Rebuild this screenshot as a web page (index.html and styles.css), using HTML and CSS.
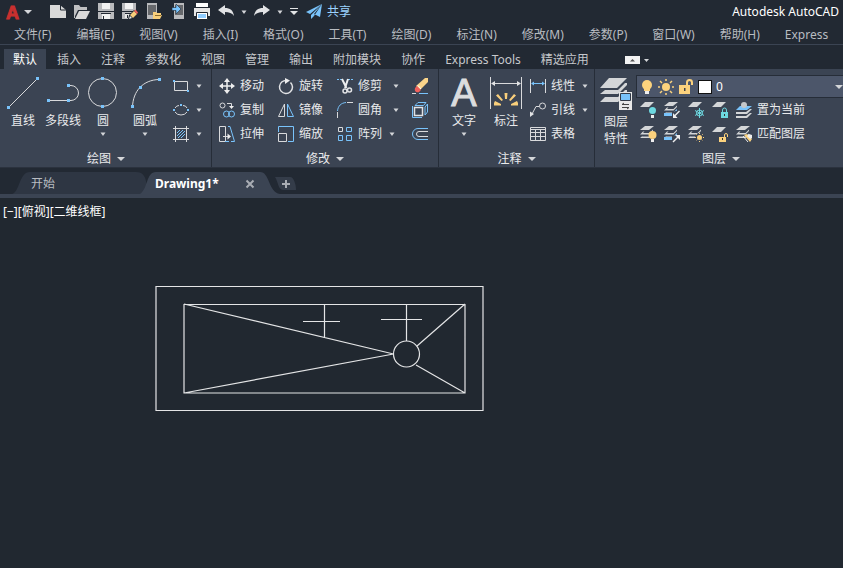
FILE: index.html
```html
<!DOCTYPE html>
<html lang="zh-CN">
<head>
<meta charset="utf-8">
<meta name="viewport" content="width=device-width, initial-scale=1">
<title>Autodesk AutoCAD</title>
<link rel="stylesheet" href="styles.css">
</head>
<body>
<svg class="defs" aria-hidden="true">
  <symbol id="caret" viewBox="0 0 8 8"><path d="M1.500 2.500h5L4 6z" fill="#d4d6d9"/></symbol>
  <symbol id="caret-lg" viewBox="0 0 8 8"><path d="M0 2h8L4 6z" fill="#d4d6d9"/></symbol>
  <symbol id="sheets" viewBox="0 0 16 16"><path d="M5 0h9L9 4H0zM3 5.500h1.500L3 7h6.500L13 3.500V5L9.500 8.500H0zM3 9.500L0 12h9.500L13 9V7.500L9.500 10.500H2z" fill="#d4d6d8"/></symbol>
  <symbol id="sheet" viewBox="0 0 16 16"><path d="M5 1h9L9 6H0z" fill="#d4d6d8"/></symbol>
</svg>

<header class="titlebar">
  <button class="app" aria-label="应用程序">
    <svg width="16" height="22" viewBox="0 0 16 22"><text x="1" y="18" class="logo">A</text></svg>
    <svg width="8" height="8"><use href="#caret-lg"/></svg>
  </button>
  <div class="quick">
    <button aria-label="新建"><svg width="16" height="18" viewBox="0 0 16 18"><path d="M0 2h10l6 5v8H0z" fill="#d9d9d9"/><path d="M10.500 2v5H16" fill="none" stroke="#222933"/></svg></button>
    <button aria-label="打开"><svg width="16" height="18" viewBox="0 0 16 18"><path d="M0 2h5l1.500 2H13v3H4L1 13v2H0z" fill="#bfc0c2"/><path d="M5 8h11l-4 8H1z" fill="#d9d9d9"/></svg></button>
    <button aria-label="保存"><svg width="16" height="18" viewBox="0 0 16 18"><path d="M0 0h16v16H0z" fill="#b9babd"/><path d="M4 0h8v6H4z" fill="#f2f2f2"/><path d="M4 11h8v5H4z" fill="#f2f2f2"/><path d="M0 8.500h16M3 10.500h10M5.500 13v3" stroke="#222933"/></svg></button>
    <button aria-label="另存为"><svg width="16" height="18" viewBox="0 0 16 18"><path d="M0 0h14v10l-5 6H0z" fill="#b9babd"/><path d="M3 0h8v6H3z" fill="#f2f2f2"/><path d="M3 11h6v4H3z" fill="#e9e9e9"/><path d="M0 8.500h13M3 10.500h7M5.500 12v3" stroke="#222933"/><path d="M6 16l1-4 5-5 4 3-6 6z" fill="#222933"/><path d="M8 12l4-4 3 3-4 4z" fill="#f9cf7b"/><path d="M12 8l1.500-1.500L16 9.500 15 11z" fill="#f0605b"/><path d="M7 16l1-3 2 2z" fill="#eee"/></svg></button>
    <button aria-label="从移动设备打开"><svg width="16" height="18" viewBox="0 0 16 18"><path d="M1 0h10v16H1z" fill="#b9babd"/><path d="M2 2h8v10H2z" fill="#66686c"/><path d="M7 9h3l1 1h4v2h1l-2 4H7z" fill="#f9cf7b"/><path d="M9 12.500h6" stroke="#8a6a2a"/></svg></button>
    <button aria-label="保存到移动设备"><svg width="16" height="18" viewBox="0 0 16 18"><path d="M4 0h10v16H4z" fill="#b9babd"/><path d="M5 2h8v10H5z" fill="#66686c"/><path d="M2 4.500h4V1l5 5-5 5V7.500H2z" fill="#79c3fb" stroke="#222933" stroke-width=".6"/></svg></button>
    <button aria-label="打印"><svg width="16" height="18" viewBox="0 0 16 18"><path d="M2 0h12v4H2z" fill="#fff"/><path d="M0 5h16v8H0z" fill="#e6e6e6"/><path d="M2.500 9.500h11v7h-11z" fill="#fff" stroke="#222933"/><path d="M4 11h8v4H4z" fill="#8fccff"/></svg></button>
    <button aria-label="放弃"><svg width="16" height="18" viewBox="0 0 16 18"><path d="M0 7l7-5v3c5 0 8 2 9 8-2-3-5-4-9-4v3z" fill="#e2e3e5"/></svg></button>
    <button class="drop" aria-label="放弃列表"><svg width="8" height="8"><use href="#caret"/></svg></button>
    <button aria-label="重做"><svg width="16" height="18" viewBox="0 0 16 18"><path d="M16 7L9 2v3C4 5 1 7 0 13c2-3 5-4 9-4v3z" fill="#e2e3e5"/></svg></button>
    <button class="drop" aria-label="重做列表"><svg width="8" height="8"><use href="#caret"/></svg></button>
    <button aria-label="自定义"><svg width="8" height="8" viewBox="0 0 8 8"><path d="M0 .500h8" stroke="#e2e3e5"/><path d="M0 3h8L4 7z" fill="#e2e3e5"/></svg></button>
    <button class="share"><svg width="16" height="18" viewBox="0 0 16 18"><path d="M16 1L0 9l4 2zM16 1L5 12v4l3-3zM16 1l-2 13-6-3z" fill="#79c3fb"/></svg>共享</button>
  </div>
  <h1>Autodesk AutoCAD</h1>
</header>

<nav class="menubar">
  <button>文件(F)</button><button>编辑(E)</button><button>视图(V)</button><button>插入(I)</button><button>格式(O)</button><button>工具(T)</button><button>绘图(D)</button><button>标注(N)</button><button>修改(M)</button><button>参数(P)</button><button>窗口(W)</button><button>帮助(H)</button><button>Express</button>
</nav>

<nav class="tabs">
  <button class="on">默认</button><button>插入</button><button>注释</button><button>参数化</button><button>视图</button><button>管理</button><button>输出</button><button>附加模块</button><button>协作</button><button>Express Tools</button><button>精选应用</button>
  <button class="collapse" aria-label="最小化功能区"><svg width="26" height="10" viewBox="0 0 26 10"><path d="M0 1h15v8H0z" fill="#f2f2f2"/><path d="M5 6.500h5L7.500 4z" fill="#555"/><path d="M19 4h5l-2.500 3z" fill="#d4d6d9"/></svg></button>
</nav>

<main class="ribbon">
  <section class="panel draw">
    <div class="tools">
      <button class="big"><svg width="32" height="32" viewBox="0 0 32 32"><path d="M1.500 30.500l29-29" class="w"/><path d="M0 29h3v3H0zM29 0h3v3h-3z" class="d"/></svg>直线</button>
      <button class="big"><svg width="32" height="32" viewBox="0 0 32 32"><path d="M2 23.500h19M21 8.500h3a7.500 7.500 0 0 1 0 15h-3" class="w"/><path d="M0 22h3v3H0zM20 22h3v3h-3zM20 7h3v3h-3z" class="d"/></svg>多段线</button>
      <button class="big"><svg width="32" height="32" viewBox="0 0 32 32"><circle cx="15.500" cy="15.500" r="14" class="w"/><path d="M14 0h3v3h-3zM14 28h3v3h-3z" class="d"/></svg>圆<svg class="under" width="8" height="8"><use href="#caret"/></svg></button>
      <button class="big wide"><svg width="32" height="32" viewBox="0 0 32 32"><path d="M3.500 30C4 14 14 3 30 2.500" class="w"/><path d="M2 28h3v3H2zM10 9h3v3h-3zM29 1h3v3h-3z" class="d"/></svg>圆弧<svg class="under" width="8" height="8"><use href="#caret"/></svg></button>
      <div class="stack">
        <button class="row" aria-label="矩形"><svg width="16" height="16" viewBox="0 0 16 16"><path d="M1.500 3.500h13v9h-13z" class="w"/><path d="M0 2h2v2H0zM14 12h2v2h-2z" class="d"/></svg><svg width="8" height="8"><use href="#caret"/></svg></button>
        <button class="row" aria-label="椭圆"><svg width="16" height="16" viewBox="0 0 16 16"><path d="M2 6Q3.500 3.500 6 3.500M10 3.500Q13 3.500 14 6M2 10Q4 13 8 13T14 10" class="w"/><path d="M0 7h2v2H0zM14 7h2v2h-2zM7 2h2v2H7z" class="d"/></svg><svg width="8" height="8"><use href="#caret"/></svg></button>
        <button class="row" aria-label="图案填充"><svg width="16" height="16" viewBox="0 0 16 16"><path d="M0 2.500h16M0 13.500h16M2.500 0v16M13.500 0v16" class="w"/><path d="M4 7l3-3M4 10l6-6M5 12l7-7M8 12l4-4" class="b"/></svg><svg width="8" height="8"><use href="#caret"/></svg></button>
      </div>
    </div>
    <button class="caption">绘图<svg width="8" height="8"><use href="#caret-lg"/></svg></button>
  </section>

  <section class="panel modify">
    <div class="tools">
      <div class="stack">
        <button class="row"><svg width="16" height="16" viewBox="0 0 16 16"><path d="M8 2v12M2 8h12" stroke="#eee" stroke-width="1.500"/><path d="M8 0l3 4H5zM8 16l-3-4h6zM0 8l4-3v6zM16 8l-4 3V5z" fill="#eee"/></svg>移动</button>
        <button class="row"><svg width="16" height="16" viewBox="0 0 16 16"><circle cx="3.500" cy="3.500" r="2.500" class="w"/><circle cx="7.500" cy="12" r="3" class="b"/><circle cx="12.500" cy="12" r="3" class="b"/><path d="M8 1.500h4.500V5" class="w"/><path d="M10 4h5l-2.500 3z" fill="#eee"/></svg>复制</button>
        <button class="row"><svg width="16" height="16" viewBox="0 0 16 16"><path d="M.500.500h6v15h-6z" class="w"/><path d="M9 .500h2l4.500 15H12M6 15.500h4" class="b"/><path d="M4 10.500h6" class="w"/><path d="M8.500 7.500l3.500 3-3.500 3z" fill="#eee"/></svg>拉伸</button>
      </div>
      <div class="stack">
        <button class="row"><svg width="16" height="16" viewBox="0 0 16 16"><path d="M9 2.500A6.500 6.500 0 1 0 14.500 9c0-2-.5-3-2-4.500" stroke="#e2e3e5" stroke-width="1.500" fill="none"/><path d="M7 0l5 2.500L7 6z" fill="#eee"/></svg>旋转</button>
        <button class="row"><svg width="16" height="16" viewBox="0 0 16 16"><path d="M6.500 2v12.500h-6z" class="w"/><path d="M9.500 2v12.500h6z" class="b"/></svg>镜像</button>
        <button class="row"><svg width="16" height="16" viewBox="0 0 16 16"><path d="M.500 6V.500h15v15H10" class="b"/><path d="M.500 7.500h8v8h-8z" class="w"/></svg>缩放</button>
      </div>
      <div class="stack">
        <button class="row"><svg width="16" height="16" viewBox="0 0 16 16"><path d="M0 1.500h5M11 1.500h5" class="b" stroke-dasharray="2 1"/><path d="M5 1l4.500 9M11 1L8 10" stroke="#eee" stroke-width="2"/><circle cx="8" cy="13" r="2" class="w2"/><circle cx="12.500" cy="12" r="2" class="w2"/></svg>修剪<svg width="8" height="8"><use href="#caret"/></svg></button>
        <button class="row"><svg width="16" height="16" viewBox="0 0 16 16"><path d="M.500 9C1 4 4 1 9 .500" class="b"/><path d="M10 .500h6M.500 10v6" class="w"/></svg>圆角<svg width="8" height="8"><use href="#caret"/></svg></button>
        <button class="row"><svg width="16" height="16" viewBox="0 0 16 16"><path d="M1.500 1.500h4v4h-4z" class="w"/><path d="M9.500 1.500h5v4h-5zM1.500 9.500h4v5h-4zM9.500 9.500h5v5h-5z" class="b"/></svg>阵列<svg class="near" width="8" height="8"><use href="#caret"/></svg></button>
      </div>
      <div class="stack">
        <button class="row" aria-label="删除"><svg width="16" height="16" viewBox="0 0 16 16"><path d="M0 15.500h4" class="w"/><path d="M7 15.500h9" class="b"/><path d="M13 0h3v4l-8 8-4-4z" fill="#fbd58a"/><path d="M5 8l4 4-2 2c-3 1-5-1-4-4z" fill="#f0605b"/><path d="M6 7.500L9 11" stroke="#fff"/></svg></button>
        <button class="row" aria-label="分解"><svg width="16" height="16" viewBox="0 0 16 16"><path d="M2.500 5.500h8v8h-8z" class="w2"/><path d="M3 3.500L6 .500h8L11.500 3.500zM13 5l2.500-3v8L13 13zM.500 4v11.500H10" class="b"/></svg></button>
        <button class="row" aria-label="偏移"><svg width="16" height="16" viewBox="0 0 16 16"><path d="M16 2.500H6a5.500 5.500 0 0 0 0 11h10" class="b"/><path d="M16 5.500H7a2.500 2.500 0 0 0 0 5h9" class="w"/></svg></button>
      </div>
    </div>
    <button class="caption">修改<svg width="8" height="8"><use href="#caret-lg"/></svg></button>
  </section>

  <section class="panel annotate">
    <div class="tools">
      <button class="big"><svg width="32" height="32" viewBox="0 0 32 32"><text x="16" y="29" class="glyph">A</text></svg>文字<svg class="under" width="8" height="8"><use href="#caret"/></svg></button>
      <button class="big wide"><svg width="32" height="32" viewBox="0 0 32 32"><path d="M.500 0v32M31.500 0v32M2 6.500h28" class="w"/><path d="M1 6.500L5 4v5zM31 6.500L27 4v5z" fill="#e2e3e5"/><path d="M14.500 16h3l-.5 6h-2zM6 18.500l2-1.500 5 6-1.500 1zM26 18.500L24 17l-5 6 1.500 1zM4 26l1-2 6 3v1.500H4zM28 26l-1-2-6 3v1.500h7z" fill="#f9cf7b"/></svg>标注</button>
      <div class="stack">
        <button class="row"><svg width="16" height="16" viewBox="0 0 16 16"><path d="M.500 1v14M15.500 1v14" class="w"/><path d="M2 5.500h12" class="b"/><path d="M1 5.500L4 3.500v4zM15 5.500l-3-2v4z" class="d"/></svg>线性<svg width="8" height="8"><use href="#caret"/></svg></button>
        <button class="row"><svg width="16" height="16" viewBox="0 0 16 16"><circle cx="12.500" cy="4" r="3" class="w"/><path d="M9 4.500H6L2 12" class="w"/><path d="M0 15V9.500l4 2.500z" fill="#e2e3e5"/></svg>引线<svg width="8" height="8"><use href="#caret"/></svg></button>
        <button class="row"><svg width="16" height="16" viewBox="0 0 16 16"><path d="M.500 1.500h15v13H.500zM0 3.500h16M0 6.500h16M0 10.500h16M5.500 4v10M10.500 4v10" class="w"/></svg>表格</button>
      </div>
    </div>
    <button class="caption">注释<svg width="8" height="8"><use href="#caret-lg"/></svg></button>
  </section>

  <section class="panel layers">
    <div class="tools">
      <button class="big"><svg width="32" height="32" viewBox="0 0 32 32"><path d="M9 0h18L17 10H0zM5 12h13l7-7h2v2l-9 9H0zM5 19h13l7-7h2v3l-9 9H0z" fill="#d4d6d8"/><path d="M19 14h13v18H19z" fill="#e8e8e8"/><path d="M20.500 15.500h10v7h-10z" fill="#79c3fb" stroke="#333b48"/><path d="M22 26.500h7M22 29.500h7M24 25l-2 1.500M27 31l2-1.500" stroke="#444" fill="none"/></svg>图层<br>特性</button>
      <div class="layer-side">
        <label class="combo">
          <svg width="12" height="16" viewBox="0 0 12 16"><circle cx="5" cy="6" r="5" fill="#fcd27d"/><path d="M2 9h6v3H2z" fill="#fcd27d"/><path d="M3 12h4v3H3z" fill="#eee"/></svg>
          <svg width="16" height="16" viewBox="0 0 16 16"><circle cx="8" cy="8" r="4" fill="#fcd27d"/><path d="M8 0v2M8 14v2M0 8h2M14 8h2M2 2l2 2M12 12l2 2M14 2l-2 2M2 14l2-2" stroke="#fcd27d" stroke-width="1.500"/></svg>
          <svg width="16" height="16" viewBox="0 0 16 16"><path d="M1 6h11v9H1z" fill="#fcd27d"/><path d="M9 6V3.500a2.500 2.500 0 0 1 5 0V6" stroke="#fcd27d" stroke-width="2" fill="none"/><path d="M6 9h1.500v3H6z" fill="#444"/></svg>
          <span class="swatch"></span>
          <select aria-label="图层"><option>0</option></select>
          <svg width="8" height="8"><use href="#caret-lg"/></svg>
        </label>
        <div class="line">
          <button aria-label="关闭图层"><svg width="16" height="16" viewBox="0 0 16 16"><use href="#sheet" y="-1"/><circle cx="12.500" cy="8.500" r="3.500" fill="#6dd8e0"/><path d="M11 13h3v3h-3z" fill="#eee"/></svg></button>
          <button aria-label="隔离"><svg width="16" height="16" viewBox="0 0 16 16"><use href="#sheets"/><path d="M0 11h9l4-4v3l-4 4H0z" class="d"/><path d="M8 16v-6l8-2v8z" fill="#3b4453"/><path d="M15.500 9l-5 5" stroke="#eee" stroke-width="1.500"/><path d="M9 16v-5l4.500 5z" fill="#eee"/></svg></button>
          <button aria-label="冻结"><svg width="16" height="16" viewBox="0 0 16 16"><use href="#sheet" y="-1"/><path d="M11.500 6v10M7 8.500l9 5M7 13.500l9-5" stroke="#6dd8e0"/><circle cx="11.500" cy="11" r="3" fill="none" stroke="#6dd8e0"/></svg></button>
          <button aria-label="锁定"><svg width="16" height="16" viewBox="0 0 16 16"><use href="#sheet" y="-1"/><path d="M9 10h7v6H9z" fill="#6dd8e0"/><path d="M10.500 10V8a2 2 0 0 1 4 0v2" stroke="#6dd8e0" fill="none"/><path d="M12 12h1v2h-1z" fill="#333"/></svg></button>
          <button class="row"><svg width="16" height="16" viewBox="0 0 16 16"><path d="M4 4h12l-5 4H0z" class="d"/><path d="M0 10h10l4-3h2l-5 5H0zM0 14h10l4-3h2l-5 5H0z" fill="#d4d6d8"/><circle cx="8" cy="3" r="3" fill="#c5c7ca"/></svg>置为当前</button>
        </div>
        <div class="line">
          <button aria-label="打开所有图层"><svg width="16" height="16" viewBox="0 0 16 16"><use href="#sheets"/><circle cx="12.500" cy="9" r="4" fill="#fcd27d"/><path d="M11 13h3v3h-3z" fill="#eee"/></svg></button>
          <button aria-label="取消隔离"><svg width="16" height="16" viewBox="0 0 16 16"><use href="#sheets"/><path d="M0 11h9l4-4v3l-4 4H0z" class="d"/><path d="M8 16v-6l8-2v8z" fill="#3b4453"/><path d="M9 16l5-5" stroke="#eee" stroke-width="1.500"/><path d="M11 9h5v5z" fill="#eee"/></svg></button>
          <button aria-label="解冻所有图层"><svg width="16" height="16" viewBox="0 0 16 16"><use href="#sheets"/><circle cx="11.500" cy="11.500" r="4.500" fill="#3b4453"/><circle cx="11.500" cy="11.500" r="2.500" fill="#fcd27d"/><path d="M11.500 7v9M7 11.500h9M8 8l7 7M15 8l-7 7" stroke="#fcd27d" stroke-dasharray="1 7"/></svg></button>
          <button aria-label="解锁"><svg width="16" height="16" viewBox="0 0 16 16"><use href="#sheet"/><path d="M7 11h7v5H7z" fill="#fcd27d"/><path d="M12.500 11V9a1.500 1.500 0 0 1 3 0v2" stroke="#fcd27d" fill="none"/><path d="M10 12h1v2h-1z" fill="#333"/></svg></button>
          <button class="row"><svg width="16" height="16" viewBox="0 0 16 16"><use href="#sheets"/><path d="M8 9l3-1 5 5-2 3z" fill="#fcd27d"/><path d="M11 10l2-2 3 1v3l-2 1z" fill="#eee"/><path d="M7 10l5 6" stroke="#eee"/></svg>匹配图层</button>
        </div>
      </div>
    </div>
    <button class="caption">图层<svg width="8" height="8"><use href="#caret-lg"/></svg></button>
  </section>
</main>

<nav class="files">
  <button class="file"><svg class="shape" viewBox="0 0 136 22" preserveAspectRatio="none"><path d="M0 22C8 20 7 0 18 0h106c12 0 10 14 12 22z" fill="#2e3643"/></svg><span>开始</span></button>
  <div class="file current"><svg class="shape" viewBox="0 0 140 22" preserveAspectRatio="none"><path d="M0 22C8 17 6 0 16 0h104c10 0 8 20 20 22z" fill="#3b4453"/></svg><button class="name">Drawing1*</button><button class="close" aria-label="关闭"><svg width="10" height="10" viewBox="0 0 10 10"><path d="M1.500 1.500l7 7M8.500 1.500l-7 7" stroke="#a9adb4" stroke-width="2"/></svg></button></div>
  <button class="new" aria-label="新图形"><svg width="22" height="14" viewBox="0 0 22 14"><path d="M0 0h15c4 0 6 8 6 13H8C3 13 3 4 0 0z" fill="#343c49"/><path d="M11 3v8M7 7h8" stroke="#a9adb4" stroke-width="2"/></svg></button>
</nav>

<section class="canvas">
  <p>[−][俯视][二维线框]</p>
  <svg class="drawing" aria-label="图形">
    <path d="M156 88.500h327v124H156zM184 106.500h281v88.500H184zM184 106l209.500 50L184 195M417 148l48-42M416 167l49 28M324.500 106v34M303 123.500h37M406.500 106v37M381 121.500h41"/>
    <circle cx="406.500" cy="156" r="13"/>
  </svg>
</section>
</body>
</html>
```
FILE: styles.css
```css
* { box-sizing: border-box; }
html, body { height: 100%; }
body {
  margin: 0;
  display: flex;
  flex-direction: column;
  overflow: hidden;
  background: #222933;
  color: #e9eaec;
  font: 12px/16px "Noto Sans", "Noto Sans CJK SC", sans-serif;
}
button {
  margin: 0;
  padding: 0;
  border: 0;
  background: none;
  color: inherit;
  font: inherit;
  white-space: nowrap;
}
svg { display: block; flex: none; overflow: visible; }
.defs { position: absolute; width: 0; height: 0; }
.w { fill: none; stroke: #d9dadc; }
.w2 { fill: none; stroke: #e2e3e5; stroke-width: 1.5; }
.b { fill: none; stroke: #79c3fb; }
.d { fill: #79c3fb; }
.logo { font: bold 18px "Liberation Sans", sans-serif; fill: #c9302f; stroke: #c9302f; stroke-width: 1; }
.glyph { font: 38px "Liberation Sans", sans-serif; fill: #dcdddf; text-anchor: middle; stroke: #dcdddf; stroke-width: 1; }

.titlebar { display: flex; align-items: center; height: 23px; padding: 0 4px 0 5px; flex: none; }
.app { display: flex; align-items: center; gap: 3px; width: 45px; }
.quick { display: flex; align-items: center; gap: 8px; }
.quick .drop { margin: 0 -2px; width: 8px; }
.share { display: flex; align-items: center; gap: 5px; color: #9bd3ff; }
.titlebar h1 { margin: 0 0 0 auto; font: inherit; color: #fff; }

.menubar {
  display: flex;
  flex: none;
  gap: 25px;
  height: 22px;
  padding: 2px 0 0 14px;
  border-bottom: 1px solid #3b4453;
  color: #b9bcc1;
}
.tabs { display: flex; flex: none; gap: 2px; height: 24px; padding: 4px 0 0 4px; color: #c6c8cc; }
.tabs button { padding: 2px 9px 0; }
.tabs .on { background: #3b4453; color: #fff; }
.tabs .collapse { padding: 2px 25px 0; }

.ribbon { display: flex; flex: none; height: 99px; padding-left: 1px; background: #3b4453; border-bottom: 1px solid #2b323e; }
.panel { display: flex; flex: none; flex-direction: column; padding-top: 5px; border-right: 1px solid #262d38; }
.tools { display: flex; height: 74px; }
.caption { display: flex; align-items: center; justify-content: center; gap: 6px; height: 19px; padding-top: 2px; }
.big { display: flex; flex-direction: column; align-items: center; width: 40px; padding-top: 3px; line-height: 17px; gap: 3px; }
.big .under { margin-top: -2px; }
.wide { width: 44px; }
.stack { display: flex; flex-direction: column; }
.row { display: flex; align-items: center; gap: 5px; height: 24px; }
.row svg + svg { margin-left: 1px; }
.draw { width: 211px; }
.draw .tools { padding-left: 2px; }
.draw .stack { margin-left: 6px; }
.modify { width: 227px; }
.modify .tools { padding-left: 7px; gap: 14px; }
.modify .row svg:last-child:not(:first-child) { margin-left: 5px; }
.modify .row .near:last-child:not(:first-child) { margin-left: 1px; }
.modify .stack:last-child { margin-left: -2px; }
.annotate { width: 156px; }
.annotate .tools { padding-left: 5px; }
.annotate .stack { margin-left: 2px; }
.layers { flex: 1; min-width: 0; border-right: 0; }
.layers .tools { padding-left: 1px; }
.layers .caption { padding-left: 4px; }
.layer-side { flex: 1; min-width: 0; }
.layers .big { display: block; }
.layers .big svg { margin: 0 auto 3px; }
.combo {
  display: flex;
  align-items: center;
  gap: 4px;
  height: 23px;
  margin-top: 1px;
  padding-left: 5px;
  background: #4c566a;
  border: 1px solid #262d38;
  border-right: 0;
}
.swatch { width: 14px; height: 14px; background: #fff; border: 1px solid #111; }
.combo select {
  flex: 1;
  min-width: 0;
  padding: 0;
  border: 0;
  appearance: none;
  background: none;
  color: #fff;
  font: inherit;
}
.line { display: flex; align-items: center; gap: 8px; height: 24px; padding-left: 4px; }

.files { display: flex; flex: none; height: 30px; padding: 4px 0 0 12px; border-bottom: 4px solid #3b4453; }
.file { position: relative; display: flex; align-items: center; width: 136px; padding: 2px 0 0 19px; color: #b9bcc1; }
.file > * { position: relative; }
.file .shape { position: absolute; left: 0; top: 0; width: 100%; height: 100%; }
.current { width: 140px; margin-left: -8px; padding: 2px 25px 0 15px; justify-content: space-between; color: #fff; font-weight: bold; }
.new { margin-left: -5px; padding-top: 2px; }

.canvas { position: relative; flex: 1; background: #212830; color: #fff; }
.canvas p { margin: 0; padding: 6px 3px; }
.drawing { position: absolute; left: 0; top: 0; width: 100%; height: 100%; fill: none; stroke: #e4e5e6; stroke-width: 1.2; }
```
